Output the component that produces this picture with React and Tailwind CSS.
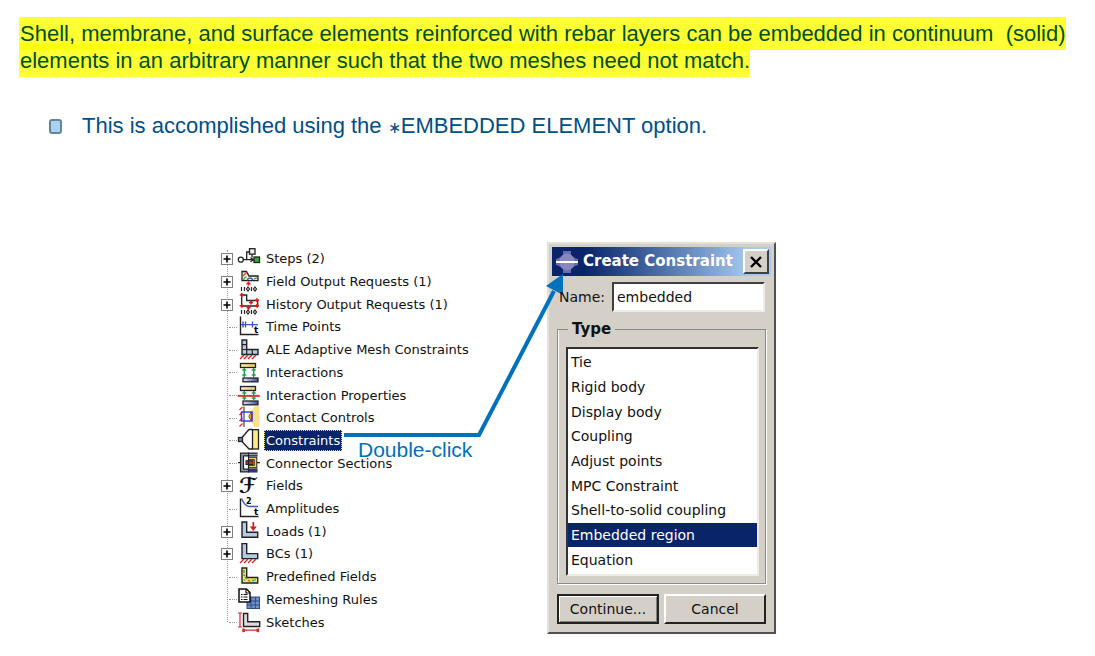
import React from "react";

const L_BLUE = "#b4cae9";

function Hatch({ y }) {
  return (
    <path
      d={`M3 ${y + 4}l4-4M7 ${y + 4}l4-4M11 ${y + 4}l4-4M15 ${y + 4}l4-4`}
      stroke="#d8232a"
      strokeWidth="1.3"
    />
  );
}

function Plus({ x, y }) {
  return <path d={`M${x - 2} ${y}h4M${x} ${y - 2}v4`} stroke="#e11" strokeWidth="1.6" />;
}

function Ticks() {
  return (
    <g stroke="#222" strokeWidth="1.2" fill="none">
      <path d="M4.500 17v4M7.500 17v4M14.500 17v4" />
      <path d="M11 17l1.500 2-1.500 2-1.500-2zM18 17l1.500 2-1.500 2-1.500-2z" />
    </g>
  );
}

function Pads() {
  return (
    <g strokeWidth="1.3">
      <defs>
        <linearGradient id="padYellow">
          <stop offset="0" stopColor="#fbeeb4" />
          <stop offset="1" stopColor="#e8c85c" />
        </linearGradient>
        <linearGradient id="padBlue">
          <stop offset="0" stopColor="#dfe4f6" />
          <stop offset="1" stopColor="#3c4fa8" />
        </linearGradient>
      </defs>
      <rect x="3.500" y="2.500" width="15" height="4" fill="url(#padYellow)" stroke="#222" />
      <rect x="6" y="17" width="15" height="3.800" fill="url(#padBlue)" stroke="#222" />
      <path
        d="M7.300 7v9M16.700 7v9M5.300 9h4M5.300 14h4M14.700 9h4M14.700 14h4"
        stroke="#18a04a"
        strokeWidth="1.400"
        fill="none"
      />
    </g>
  );
}

function Axes() {
  return <path d="M3.500 1.500v18h18" stroke="#222" strokeWidth="1.400" fill="none" />;
}

const icons = {
  steps: (
    <g stroke="#222" strokeWidth="1.300" fill="none">
      <circle cx="3.800" cy="12.700" r="2.500" />
      <path d="M6.500 12.700h10M9.700 12.700V5h2.500M15 7.500v3M13.500 10.700l3 2-3 2" />
      <rect x="12.500" y="1.700" width="5.500" height="5.500" fill="#eee" />
      <rect x="17" y="10" width="5.500" height="5.500" fill="#35a835" />
    </g>
  ),
  field: (
    <g>
      <path d="M5 1.500h4.500l2.500 4.500h9v4.700H5z" fill="#f3efda" stroke="#222" strokeWidth="1.300" />
      <path d="M6 6l4-4" stroke="#e33" strokeWidth="1.300" />
      <path d="M10 10q3-4 6 0" stroke="#36c" strokeWidth="1.300" fill="none" />
      <path d="M6.500 10q1-3 3-3M17 9l3-1" stroke="#2a2" strokeWidth="1.200" fill="none" />
      <Plus x={11.5} y={13.6} />
      <Ticks />
    </g>
  ),
  history: (
    <g>
      <path d="M4.700 2h5v5.500h11v5.500h-16z" fill="#fff" stroke="#222" strokeWidth="1.300" />
      <Plus x={4.7} y={2} />
      <Plus x={4.7} y={12.700} />
      <Plus x={14} y={9.500} />
      <Plus x={20} y={7.300} />
      <Plus x={20} y={12.700} />
      <Plus x={11.5} y={14.800} />
      <Ticks />
    </g>
  ),
  time: (
    <g>
      <Axes />
      <path d="M4 9.600h17M6 6.500v6M8.500 6.500v6M15.500 6.500v6" stroke="#3a57c4" strokeWidth="1.400" />
      <text x="17" y="18" fontSize="9" fontWeight="700" fontFamily="DejaVu Sans">t</text>
    </g>
  ),
  ale: (
    <g>
      <path d="M5 2h4.700v9.500H21v5H5z" fill={L_BLUE} stroke="#222" strokeWidth="1.400" />
      <path d="M5 6.700h4.700M5 11.500h4.700v5M15.300 11.500v5" stroke="#222" strokeWidth="1.200" fill="none" />
      <Hatch y={17} />
    </g>
  ),
  interactions: <Pads />,
  properties: (
    <g>
      <Pads />
      <path d="M.700 11.900h22" stroke="#e03838" strokeWidth="2" />
    </g>
  ),
  contact: (
    <g>
      <path d="M22.500 0h-5q-1.500 3-3.500 5-4 5.500 0 11 2 2 3.500 5h5z" fill="#f8e08c" />
      <path d="M15 6q-6 4.500 0 9z" fill="#e3a92c" stroke="#7a5a12" strokeWidth="1" />
      <path d="M2.500 4l3-3M2.500 9l3-3M2.500 15l3-3M2.500 20.500l3-3" stroke="#d8232a" strokeWidth="1.200" />
      <path d="M7 .500v20.500" stroke="#444" strokeWidth="1.200" />
      <rect x="4.500" y="6" width="10.500" height="9" fill="none" stroke="#3333dd" strokeWidth="1.400" />
    </g>
  ),
  constraints: (
    <g stroke="#222" strokeWidth="1.300">
      <path d="M5 8.500l7-8h3.500M5 12.500l7 7.500h3.500" fill="none" />
      <rect x="15.500" y=".700" width="6" height="19.300" fill="#fbe98c" />
      <rect x="1.500" y="8.500" width="4" height="4" fill="#6f8ab8" />
    </g>
  ),
  connector: (
    <g fill="none" stroke="#222">
      <path d="M20.500 2.500H5v16h15.500" strokeWidth="4.200" />
      <path d="M20 2.500H5v16h15" stroke="#8b9cba" strokeWidth="1.600" />
      <path d="M12 18.500h8" stroke="#24348f" strokeWidth="1.800" />
      <path d="M1 10.600h3M20 10.600h3" strokeWidth="1.300" />
      <path d="M12 6.500h6.500v8H12" strokeWidth="3.600" />
      <path d="M12 6.500h6.500v8H12" stroke="#f2d060" strokeWidth="1.600" />
      <rect x="9" y="8.700" width="7" height="3.800" fill="#d62424" strokeWidth="1" />
      <path d="M11.500 .500v20" strokeWidth="1.200" />
    </g>
  ),
  fields: (
    <text x="2" y="19" fontSize="21" fontWeight="700" fontFamily="DejaVu Serif, DejaVu Sans" fill="#111">ℱ</text>
  ),
  amplitudes: (
    <g>
      <Axes />
      <path d="M4.500 1.500q3 7.500 8 8h8.500" stroke="#3a57c4" strokeWidth="1.400" fill="none" />
      <text x="9" y="7" fontSize="8" fontWeight="700" fontFamily="DejaVu Sans">2</text>
      <text x="17" y="18" fontSize="9" fontWeight="700" fontFamily="DejaVu Sans">t</text>
    </g>
  ),
  loads: (
    <g>
      <path d="M5 2h4.700v10.300h11v5H5z" fill={L_BLUE} stroke="#222" strokeWidth="1.400" />
      <path d="M16.300 2v6" stroke="#e01818" strokeWidth="1.700" />
      <path d="M12.800 6.500h7l-3.500 4.500z" fill="#e01818" />
    </g>
  ),
  bcs: (
    <g>
      <path d="M5 1.600h4.700v10h11v5H5z" fill={L_BLUE} stroke="#222" strokeWidth="1.400" />
      <Hatch y={17} />
    </g>
  ),
  predefined: (
    <g>
      <path d="M5 3h4.700v9.500h11v5.500H5z" fill="#f5e65c" stroke="#222" strokeWidth="1.400" />
      <path d="M7 5v3M8 12l2 2M15 15.500h2.500" stroke="#35b04a" strokeWidth="1.500" />
      <path d="M6.500 9.500l1.500 1.500M11 15l2 1.500" stroke="#e8572a" strokeWidth="1.500" />
      <path d="M6.500 15h2M18 14v2" stroke="#58b9e8" strokeWidth="1.500" />
    </g>
  ),
  remeshing: (
    <g>
      <rect x="10" y="9" width="12.500" height="11.500" fill="#6f90c8" stroke="#2e4c85" strokeWidth="1" />
      <path d="M14 9v11.500M18.300 9v11.500M10 13h12.500M10 17h12.500" stroke="#2e4c85" strokeWidth="1" />
      <path d="M2 1h7.500l3.500 3.500V14H2z" fill="#fff" stroke="#111" strokeWidth="1.500" />
      <path d="M9 1v4h4M4 6.500h1.500M6.500 6.500h4M4 9h1.500M6.500 9h4M4 11.500h1.500M6.500 11.500h4" stroke="#111" strokeWidth="1.200" fill="none" />
    </g>
  ),
  sketches: (
    <g>
      <path d="M6.500 2.500h4.200v8.300h12v4.700H6.500z" fill="#dcdcdc" stroke="#222" strokeWidth="1.400" />
      <path d="M3 2v14M1 2h4M1 16h4M6 19.200h15.500M6 17.200v4M21.500 17.200v4M8 18l-2 1.200L8 20.400M19.500 18l2 1.200-2 1.200" stroke="#d82a2a" strokeWidth="1.200" fill="none" />
    </g>
  ),
};

const tree = [
  { icon: "steps", label: "Steps (2)", expandable: true },
  { icon: "field", label: "Field Output Requests (1)", expandable: true },
  { icon: "history", label: "History Output Requests (1)", expandable: true },
  { icon: "time", label: "Time Points" },
  { icon: "ale", label: "ALE Adaptive Mesh Constraints" },
  { icon: "interactions", label: "Interactions" },
  { icon: "properties", label: "Interaction Properties" },
  { icon: "contact", label: "Contact Controls" },
  { icon: "constraints", label: "Constraints", selected: true },
  { icon: "connector", label: "Connector Sections" },
  { icon: "fields", label: "Fields", expandable: true },
  { icon: "amplitudes", label: "Amplitudes" },
  { icon: "loads", label: "Loads (1)", expandable: true },
  { icon: "bcs", label: "BCs (1)", expandable: true },
  { icon: "predefined", label: "Predefined Fields" },
  { icon: "remeshing", label: "Remeshing Rules" },
  { icon: "sketches", label: "Sketches" },
];

const types = [
  "Tie",
  "Rigid body",
  "Display body",
  "Coupling",
  "Adjust points",
  "MPC Constraint",
  "Shell-to-solid coupling",
  "Embedded region",
  "Equation",
];

function TreeRow({ icon, label, expandable, selected }) {
  return (
    <li className="flex flex-1 items-center">
      <span className="flex w-4 items-center">
        {expandable ? (
          <button
            type="button"
            aria-label={`Expand ${label}`}
            className="z-10 flex size-3 items-center justify-center border border-[#808080] bg-white"
          >
            <svg viewBox="0 0 8 8" className="size-2" aria-hidden="true">
              <path d="M.500 4h7M4 .500v7" stroke="#000" strokeWidth="1.600" />
            </svg>
          </button>
        ) : (
          <span className="ml-2 w-2 border-t border-dotted border-[#999]" />
        )}
      </span>
      <svg viewBox="0 2 24 20" className="h-5 w-6 shrink-0 overflow-visible" aria-hidden="true">
        {icons[icon]}
      </svg>
      {selected ? (
        <span className="ml-[3px] border border-dotted border-[#f0dc90] bg-[#0a246a] px-px leading-[19px] text-white">
          {label}
        </span>
      ) : (
        <span className="ml-[3px] px-0.5 leading-5">{label}</span>
      )}
    </li>
  );
}

function Dialog() {
  return (
    <section
      aria-label="Create Constraint"
      className="flex w-[229px] shrink-0 flex-col border-2 border-t-[#e4e1da] border-r-[#505050] border-b-[#505050] border-l-[#e4e1da] bg-[#d4d0c8] px-[3px] pt-[3px] pb-2 font-['DejaVu_Sans',sans-serif] text-[14px] text-[#111]"
    >
      <header className="flex h-[29px] items-center bg-linear-to-r from-[#0a246a] from-15% to-[#a6caf0] to-90% pr-0.5 pl-[3px]">
        <svg viewBox="0 0 24 24" className="size-6" aria-hidden="true">
          <path d="M8 1h8v4l4 3 3 1v6l-3 1-4 3v4H8v-4l-4-3-3-1V9l3-1 4-3z" fill="#6a6ab0" />
          <ellipse cx="12" cy="12" rx="7.500" ry="8.500" fill="#8787c2" />
          <rect x="1" y="11" width="22" height="2" fill="#fff" />
        </svg>
        <h2 className="ml-1 flex-1 text-[15px] font-bold whitespace-nowrap text-white">Create Constraint</h2>
        <button
          type="button"
          aria-label="Close"
          className="flex h-[25px] w-[26px] shrink-0 items-center justify-center border-2 border-t-white border-r-[#404040] border-b-[#404040] border-l-white bg-[#d4d0c8]"
        >
          <svg viewBox="0 0 12 12" className="size-3" aria-hidden="true">
            <path d="M1 1l10 10M11 1L1 11" stroke="#000" strokeWidth="2.400" />
          </svg>
        </button>
      </header>
      <div className="mt-1.5 flex items-center pr-1.5 pl-[7px]">
        <label htmlFor="name" className="z-10 w-[53px]">Name:</label>
        <input
          id="name"
          defaultValue="embedded"
          className="h-[30px] min-w-0 flex-1 border-2 border-t-[#404040] border-r-[#efece6] border-b-[#efece6] border-l-[#404040] bg-white px-[3px] outline-none"
        />
      </div>
      <fieldset className="mx-[5px] mt-1 border border-[#8a8a88] px-2 pt-1 pb-[7px] shadow-[1px_1px_0_#fff,inset_1px_0_0_#fff]">
        <legend className="ml-0.5 px-1 text-[15px] leading-[27px] font-bold">Type</legend>
        <div className="mr-[-2px] flex h-[229px] flex-col border-2 border-t-[#303030] border-r-[#efece6] border-b-[#efece6] border-l-[#303030] bg-white pt-px pb-0.5">
          {types.map((t) => (
            <label key={t} className="flex flex-1 items-center pl-[3px] leading-5 has-checked:bg-[#0a246a] has-checked:text-white">
              <input
                type="radio"
                name="type"
                value={t}
                defaultChecked={t === "Embedded region"}
                className="size-0 appearance-none"
              />
              {t}
            </label>
          ))}
        </div>
      </fieldset>
      <div className="mx-[5px] mt-[10px] flex gap-[5px]">
        <button type="button" className="h-[30px] flex-1 border-2 border-[#222] bg-[#d4d0c8] shadow-[inset_1px_1px_0_#fff,inset_-1px_-1px_0_#808080]">
          Continue...
        </button>
        <button type="button" className="h-[30px] flex-1 border-2 border-t-white border-r-[#222] border-b-[#222] border-l-white bg-[#d4d0c8]">
          Cancel
        </button>
      </div>
    </section>
  );
}

export default function App() {
  return (
    <main className="bg-white pt-5 font-['Liberation_Sans',Arial,sans-serif]">
      <p className="pr-3 pl-[19px] text-[22px] leading-[27px] text-[#00501e]">
        <mark className="bg-[#ffff00cc] box-decoration-clone py-1 pl-px text-inherit">
          <span className="relative">
            Shell, membrane, and surface elements reinforced with rebar layers can be embedded in continuum&nbsp;{" "}
            (solid) elements in an arbitrary manner such that the two meshes need not match.
          </span>
        </mark>
      </p>
      <ul className="mt-[37px] pl-[49px]">
        <li className="flex items-center text-[22px] leading-[30px] text-[#005087]">
          <span className="mr-5 h-[15px] w-[13px] rounded-[3px] border-2 border-[#64869c] bg-[#a9d3f0]" />
          <span>
            This is accomplished using the <span className="text-[16px] leading-none">∗</span>EMBEDDED ELEMENT option.
          </span>
        </li>
      </ul>
      <div className="relative mt-[101px] ml-[221px] flex">
        <ul className="relative flex w-[326px] flex-col pt-1.5 font-['DejaVu_Sans',sans-serif] text-[13px] whitespace-nowrap text-[#111]">
          <li aria-hidden="true" className="absolute top-2 bottom-3 left-1.5 border-l border-dotted border-[#999]" />
          {tree.map((row) => (
            <TreeRow key={row.icon} {...row} />
          ))}
        </ul>
        <Dialog />
        <svg
          viewBox="0 0 555 392"
          className="pointer-events-none absolute top-0 left-0 h-[392px] w-[555px]"
          aria-hidden="true"
        >
          <path d="M123 193h135l75-144" fill="none" stroke="#0071bc" strokeWidth="4" />
          <path d="M342 32v21L325 44z" fill="#0071bc" />
        </svg>
        <span className="absolute top-[196px] left-[137px] text-[21px] leading-6 text-[#0071bc]">Double-click</span>
      </div>
    </main>
  );
}
